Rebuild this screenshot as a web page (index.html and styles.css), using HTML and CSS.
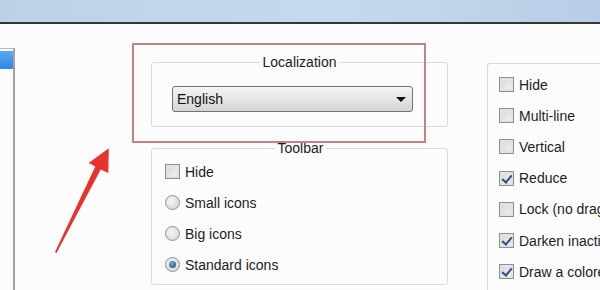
FILE: index.html
```html
<!DOCTYPE html>
<html lang="en">
<head>
  <meta charset="UTF-8">
  <title>Settings</title>
  <link rel="stylesheet" href="styles.css">
</head>
<body>
  <div class="titlebar"></div>

  <div class="content">
    <div class="tabs">
      <div class="tab-sel"></div>
    </div>

    <div class="middle">
      <fieldset class="group loc">
        <legend>Localization</legend>
        <div class="combo">
          <span>English</span>
          <span class="caret"></span>
        </div>
      </fieldset>

      <fieldset class="group toolbar">
        <legend>Toolbar</legend>
        <div class="row"><span class="check"></span>Hide</div>
        <div class="row"><span class="radio"></span>Small icons</div>
        <div class="row"><span class="radio"></span>Big icons</div>
        <div class="row"><span class="radio on"></span>Standard icons</div>
      </fieldset>
    </div>

    <div class="right">
      <div class="group plain">
        <div class="row"><span class="check"></span>Hide</div>
        <div class="row"><span class="check"></span>Multi-line</div>
        <div class="row"><span class="check"></span>Vertical</div>
        <div class="row"><span class="check on"></span>Reduce</div>
        <div class="row"><span class="check"></span>Lock (no drag)</div>
        <div class="row"><span class="check on"></span>Darken inactive tabs</div>
        <div class="row"><span class="check on"></span>Draw a colored bar</div>
      </div>
    </div>
  </div>

  <!-- annotation drawn over the screenshot -->
  <div class="mark"></div>
  <svg class="arrow" width="70" height="120" viewBox="50 140 70 120">
    <polygon points="55,252 95.3,166.6 88.7,163 108.8,148.3 108.3,173 100.7,169.4 56.5,253" fill="#e8322c"/>
  </svg>
</body>
</html>
```

FILE: styles.css
```css
* { box-sizing: border-box; }
body {
  margin: 0;
  width: 600px;
  height: 290px;
  overflow: hidden;
  position: relative;
  background: #fcfcfc;
  color: #1c1c1c;
  font-family: "Liberation Sans", Arial, sans-serif;
  font-size: 14px;
}
.titlebar {
  height: 24px;
  background: linear-gradient(to right, #bcd1e8, #c6d9ee 55%, #b8cee6);
  border-bottom: 2px solid #33363a;
}
.content {
  display: flex;
  align-items: flex-start;
  height: 266px;
  white-space: nowrap;
}
.tabs {
  width: 15px;
  height: 260px;
  margin-top: 24px;
  padding-top: 2px;
  border-top: 1px solid #b8b8b8;
  border-right: 2px solid #a2a2a2;
  flex-shrink: 0;
}
.tab-sel {
  height: 18px;
  background: linear-gradient(#5ea8f0, #2f86e4);
}

.middle {
  width: 297px;
  margin-left: 136px;
  flex-shrink: 0;
}
.group {
  margin: 0;
  min-width: 0;
  border: 1px solid #d9d9d9;
  border-radius: 3px;
}
.group legend {
  margin: 0 auto;
  padding: 0 3px;
  line-height: 16px;
}
.loc {
  margin-top: 30px;
  padding: 16px 20px 14px;
}
.combo {
  width: 241px;
  height: 26px;
  display: flex;
  align-items: center;
  justify-content: space-between;
  padding: 0 6px 0 4px;
  border: 1px solid #727272;
  border-radius: 3px;
  background: linear-gradient(#f4f4f4, #e6e6e6 50%, #d4d4d4);
  color: #111;
}
.caret {
  width: 0;
  height: 0;
  border-left: 5px solid transparent;
  border-right: 5px solid transparent;
  border-top: 5px solid #111;
}
.toolbar {
  margin-top: 13px;
  padding: 0 11px 4px 13px;
}

.row {
  height: 31px;
  display: flex;
  align-items: center;
  gap: 5px;
}
.check {
  position: relative;
  width: 15px;
  height: 15px;
  border: 1px solid #8e8f8f;
  background: linear-gradient(135deg, #d6d6d6, #f4f4f4);
  box-shadow: inset 0 0 0 2px #e2e2e2;
  flex-shrink: 0;
}
.check.on::after {
  content: "";
  position: absolute;
  left: 4px;
  top: 1px;
  width: 4px;
  height: 8px;
  border-right: 2px solid #2c4f88;
  border-bottom: 2px solid #2c4f88;
  transform: rotate(40deg);
}
.radio {
  position: relative;
  width: 15px;
  height: 15px;
  border: 1px solid #8e8f8f;
  border-radius: 50%;
  background: radial-gradient(circle at 40% 40%, #f6f6f6, #d0d0d0);
  flex-shrink: 0;
}
.radio.on::after {
  content: "";
  position: absolute;
  left: 3px;
  top: 3px;
  width: 7px;
  height: 7px;
  border-radius: 50%;
  background: radial-gradient(circle at 40% 35%, #6fb2e0, #123f6b);
}

.right {
  margin-left: 39px;
  margin-top: 39px;
  flex-shrink: 0;
}
.plain {
  width: 200px;
  height: 240px;
  padding: 5px 11px 0;
  border-right: 0;
  border-bottom: 0;
  border-radius: 3px 0 0 0;
}
.plain .row { height: 31.2px; }

.mark {
  position: absolute;
  left: 132px;
  top: 43px;
  width: 294px;
  height: 100px;
  border: 2px solid #c58282;
}
.arrow {
  position: absolute;
  left: 50px;
  top: 140px;
}
```
